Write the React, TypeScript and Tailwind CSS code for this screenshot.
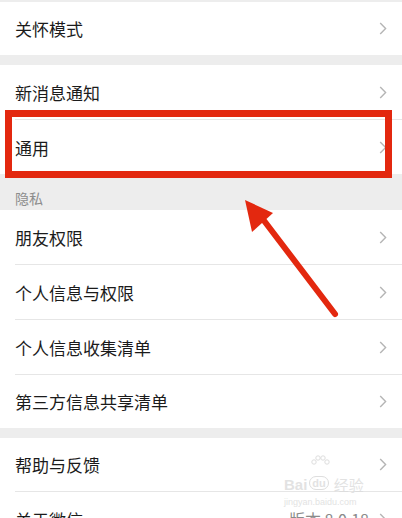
import React from "react";

const font = { fontFamily: '"Noto Sans CJK SC", "Noto Sans", sans-serif' };

function Chevron() {
  return (
    <svg width="8" height="13" viewBox="0 0 8 13" className="shrink-0">
      <path d="M1.2 1 L6.6 6.5 L1.2 12" fill="none" stroke="#b5b5b5" strokeWidth="1.4" />
    </svg>
  );
}

function Row({ label, value, h, divider = true }: { label: string; value?: string; h: string; divider?: boolean }) {
  return (
    <div className="bg-white pl-[15px]">
      <div
        className={
          h + " flex items-center justify-between pr-[15px] " + (divider ? "border-b border-[#e6e6e6]" : "")
        }
      >
        <span className="text-[17px] text-[#1b1b1b] leading-none">{label}</span>
        <div className="flex items-center gap-[10px]">
          {value && <span className="text-[16px] text-[#8a8a8a] leading-none">{value}</span>}
          <Chevron />
        </div>
      </div>
    </div>
  );
}

export default function App() {
  return (
    <div className="relative w-[402px] h-[518px] overflow-hidden bg-[#ededed]" style={font}>
      <div className="h-[2px]" />
      <Row label="关怀模式" h="h-[53px]" divider={false} />
      <div className="h-[10px]" />
      <Row label="新消息通知" h="h-[55px]" />
      <Row label="通用" h="h-[54px]" divider={false} />

      {/* 隐私 */}
      <div className="h-[36px] flex items-end pb-[5px] pl-[15px]">
        <span className="text-[14px] text-[#8c8c8c] leading-none">隐私</span>
      </div>
      <Row label="朋友权限" h="h-[55px]" />
      <Row label="个人信息与权限" h="h-[55px]" />
      <Row label="个人信息收集清单" h="h-[55px]" />
      <Row label="第三方信息共享清单" h="h-[53px]" divider={false} />
      <div className="h-[10px]" />
      <Row label="帮助与反馈" h="h-[54px]" />
      <Row label="关于微信" value="版本 8.0.18" h="h-[54px]" divider={false} />

      {/* red highlight box */}
      <div className="absolute left-[5px] top-[110px] w-[387px] h-[68px] border-[7px] border-[#e3280f]" />

      {/* red arrow */}
      <svg className="absolute left-0 top-0" width="402" height="518">
        <line x1="335" y1="314" x2="262" y2="218" stroke="#e3280f" strokeWidth="6" strokeLinecap="round" />
        <polygon points="245,200 252,232 273,213" fill="#e3280f" />
      </svg>

      {/* watermark */}
      <div className="absolute left-[284px] top-[468px] flex flex-col items-start text-[#dcdcdc] opacity-80 pointer-events-none">
        <div className="flex items-end gap-[2px]">
          <span className="text-[15px] font-bold leading-none" style={{ fontFamily: '"Liberation Sans", sans-serif' }}>
            Bai
          </span>
          <span className="relative">
            <svg className="absolute left-[1px] top-[-13px]" width="20" height="14" viewBox="0 0 20 14">
              <circle cx="4" cy="7" r="2.2" fill="none" stroke="#d6d6d6" />
              <circle cx="8" cy="3" r="2.2" fill="none" stroke="#d6d6d6" />
              <circle cx="13" cy="3" r="2.2" fill="none" stroke="#d6d6d6" />
              <circle cx="17" cy="7" r="2.2" fill="none" stroke="#d6d6d6" />
            </svg>
            <span className="text-[11px] font-bold leading-none rounded-full border border-[#d6d6d6] px-[2px]" style={{ fontFamily: '"Liberation Sans", sans-serif' }}>
              du
            </span>
          </span>
          <span className="text-[15px] leading-none ml-[3px]">经验</span>
        </div>
        <span className="text-[9px] leading-none mt-[6px]" style={{ fontFamily: '"Liberation Sans", sans-serif' }}>
          jingyan.baidu.com
        </span>
      </div>
    </div>
  );
}
